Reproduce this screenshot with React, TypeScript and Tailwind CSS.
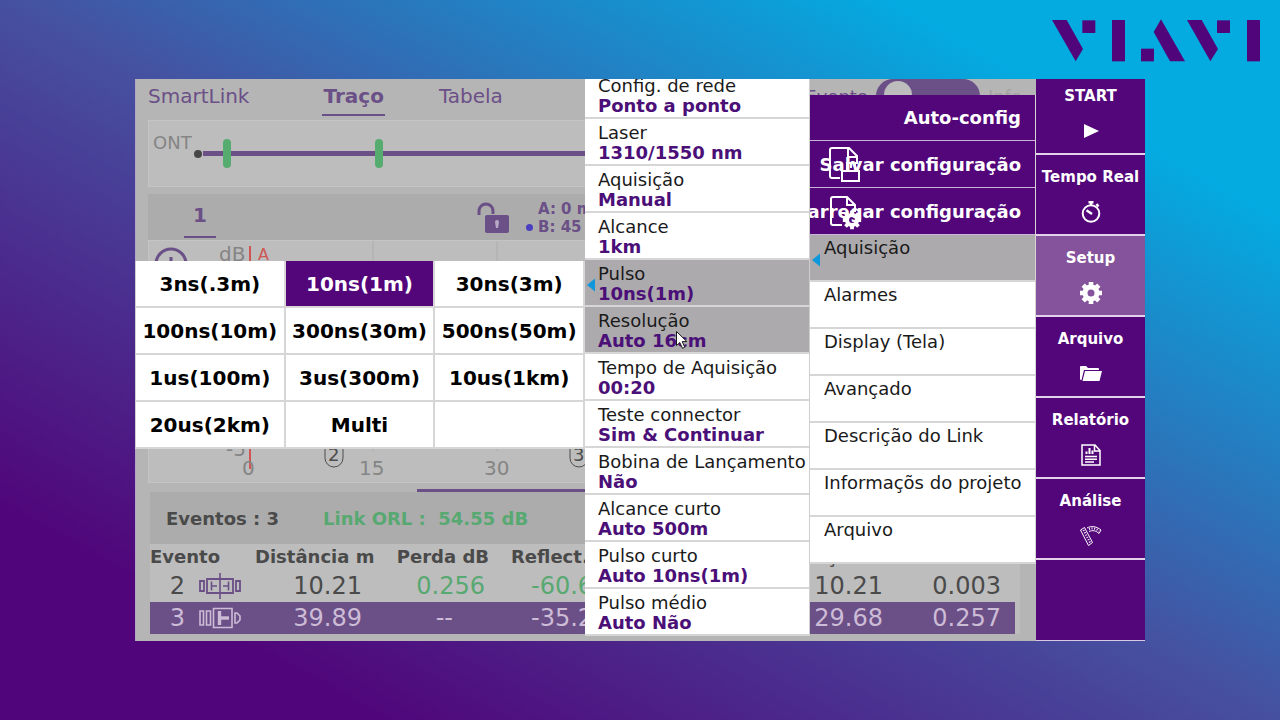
import React, { useState } from "react";

const acquisitionSettings = [
  { label: "Config. de rede", value: "Ponto a ponto" },
  { label: "Laser", value: "1310/1550 nm" },
  { label: "Aquisição", value: "Manual" },
  { label: "Alcance", value: "1km" },
  { label: "Pulso", value: "10ns(1m)", active: true, open: true },
  { label: "Resolução", value: "Auto 16cm", active: true },
  { label: "Tempo de Aquisição", value: "00:20" },
  { label: "Teste connector", value: "Sim & Continuar" },
  { label: "Bobina de Lançamento", value: "Não" },
  { label: "Alcance curto", value: "Auto 500m" },
  { label: "Pulso curto", value: "Auto 10ns(1m)" },
  { label: "Pulso médio", value: "Auto Não" },
];

const setupSections = [
  "Aquisição",
  "Alarmes",
  "Display (Tela)",
  "Avançado",
  "Descrição do Link",
  "Informaçõs do projeto",
  "Arquivo",
];

const pulseWidths = [
  "3ns(.3m)",
  "10ns(1m)",
  "30ns(3m)",
  "100ns(10m)",
  "300ns(30m)",
  "500ns(50m)",
  "1us(100m)",
  "3us(300m)",
  "10us(1km)",
  "20us(2km)",
  "Multi",
];

const Logo = () => (
  <svg
    className="absolute top-0 right-0 h-20 w-60"
    viewBox="0 0 720 240"
    fill="#50067a"
    role="img"
    aria-label="VIAVI"
  >
    <path d="M36 60H80L129 147L107 184Z" />
    <path d="M127 61H166V99H127Z" />
    <path d="M216 60H255V184H216Z" />
    <path d="M303 146H342V184H303Z" />
    <path d="M363 58L435 184H390L341 96Z" />
    <path d="M441 60H485L534 147L511 184Z" />
    <path d="M531 61H570V99H531Z" />
    <path d="M621 60H660V184H621Z" />
  </svg>
);

const PlayIcon = () => (
  <svg className="size-6" viewBox="0 0 24 24" fill="currentColor">
    <path d="M5 5L20 12L5 19Z" />
  </svg>
);

const StopwatchIcon = () => (
  <svg
    className="size-6"
    viewBox="0 0 24 24"
    fill="none"
    stroke="currentColor"
    strokeWidth="2"
  >
    <circle cx="12" cy="13.5" r="8.3" />
    <path d="M9.5 2.2H14.5M12 2V5M17.5 4L19.5 6.5" strokeWidth="2.4" />
    <path d="M7.5 10.2L13 14" strokeWidth="2.4" />
  </svg>
);

const GearIcon = ({ className }: { className: string }) => (
  <svg
    className={className}
    viewBox="0 0 24 24"
    fill="none"
    stroke="currentColor"
  >
    <circle cx="12" cy="12" r="6" strokeWidth="5" />
    <path
      d="M12 1V5M12 19V23M1 12H5M19 12H23M4.2 4.2L7 7M17 17L19.8 19.8M4.2 19.8L7 17M17 7L19.8 4.2"
      strokeWidth="4.6"
    />
  </svg>
);

const FolderIcon = () => (
  <svg className="size-6" viewBox="0 0 24 24" fill="currentColor">
    <path d="M1 5Q1 4 2 4H7L9 6H19Q20 6 20 7V8H5L2.5 18H2Q1 18 1 17Z" />
    <path d="M6 9H23L20.5 19H3.5Z" />
  </svg>
);

const ReportIcon = () => (
  <svg
    className="size-6"
    viewBox="0 0 24 24"
    fill="none"
    stroke="currentColor"
    strokeWidth="1.5"
  >
    <path d="M3 2H16L21 7.5V22H3ZM15.5 2V8H21" />
    <path d="M7.5 11V8.5M10.5 11V5M13.5 11V7.5" strokeWidth="2" />
    <path d="M6 13.5H18M6 16.2H18M6 19H15" />
  </svg>
);

const AnalysisIcon = () => (
  <svg
    className="size-6"
    viewBox="0 0 24 24"
    fill="none"
    stroke="currentColor"
    strokeWidth="1"
  >
    <path d="M1.5 6L5.5 3.5L13.5 18.5L9.5 21.5Z" />
    <path d="M4.5 6L11 18.5" strokeDasharray="1 1.6" strokeWidth="2" />
    <path d="M8 4C12 1.5 18 2.5 22 6L20 9.5C17 6.5 13.5 6 10 7.5" />
    <path d="M10 5C13.5 3.6 17.5 4.8 20 7" strokeDasharray="1 1.6" strokeWidth="2" />
  </svg>
);

const FileSaveIcon = () => (
  <svg
    className="absolute top-[5px] left-[18px] h-9 w-8"
    viewBox="0 0 32 36"
    fill="none"
    stroke="#fff"
    strokeWidth="2"
  >
    <path d="M12 32H4Q2 32 2 30V4Q2 2 4 2H21L29 10V18M20 2V11H29" />
    <path d="M14 25H31V35H14ZM19 25V17H27V25M23 18V22" />
  </svg>
);

const FileCogIcon = () => (
  <>
    <svg
      className="absolute top-[7px] left-[18px] h-9 w-8"
      viewBox="0 0 32 36"
      fill="none"
      stroke="#fff"
      strokeWidth="2"
    >
      <path d="M14 30H5Q3 30 3 28V4Q3 2 5 2H19L27 10V17M19 2V10H27" />
    </svg>
    <GearIcon className="absolute top-[22px] left-8 size-5" />
  </>
);

const Caret = () => (
  <svg
    className="absolute top-[18px] left-0.5 h-3.5 w-2"
    viewBox="0 0 8 14"
    fill="#0f97dc"
  >
    <path d="M8 0.5V13.5L0 7Z" />
  </svg>
);

const Pointer = () => (
  <svg
    className="absolute top-[258px] left-[90px] h-5 w-3.5"
    viewBox="0 0 14 20"
    fill="#fff"
    stroke="#1a1a1a"
  >
    <path d="M1.5 1.5V15.5L4.8 12.6L7.5 18.3L9.8 17.2L7.2 11.6H11.8Z" />
  </svg>
);

const SpliceIcon = () => (
  <svg
    className="block h-7 w-[42px]"
    viewBox="0 0 42 28"
    fill="none"
    stroke="currentColor"
    strokeWidth="1.8"
  >
    <path d="M1 9H5V19H1ZM37 9H41V19H37ZM8 7H34V21H8Z" />
    <path
      d="M21 1V27M12.5 9.5V18.5M12.5 14H18M29.5 9.5V18.5M29.5 14H24"
      strokeWidth="1.6"
    />
  </svg>
);

const ConnectorIcon = () => (
  <svg
    className="block h-7 w-[42px]"
    viewBox="0 0 42 28"
    fill="none"
    stroke="currentColor"
    strokeWidth="1.6"
  >
    <path d="M1 7H4.5V21H1ZM7.5 7H11.5V21H7.5ZM14.5 4.5H33V23.5H14.5Z" />
    <path d="M20.5 7V21" strokeWidth="3.4" />
    <path d="M21 14H30" strokeWidth="3.4" />
    <path d="M36 9V19H38L41 16V12L38 9Z" />
  </svg>
);

const LinkView = () => (
  <section className="flex h-[67px] shrink-0 border border-[#c4c4c4] bg-[#bdbdbd] pl-1">
    <span className="pt-2.5 text-[18px] leading-6 text-[#858585]">ONT</span>
    <svg className="h-full w-0 grow">
      <circle cx="6" cy="33" r="4" fill="#474747" />
      <rect x="11" y="30" width="100%" height="5" fill="#6b4f87" />
      <rect x="31" y="18" width="8" height="29" rx="4" fill="#56ab6e" />
      <rect x="183" y="18" width="8" height="29" rx="4" fill="#56ab6e" />
    </svg>
  </section>
);

const TraceView = () => (
  <section className="mt-[7px] shrink-0">
    <div className="flex h-[46px] bg-[#acacac]">
      <div className="ml-9 flex h-11 w-8 items-center justify-center border-b-2 border-[#6b4f87] text-[20px] font-bold text-[#6b4f87]">
        1
      </div>
      <svg className="mt-2 ml-[260px] h-8 w-9" viewBox="0 0 36 32">
        <path
          d="M3 13V9A7 7 0 0 1 17 9V12"
          fill="none"
          stroke="#6b4f87"
          strokeWidth="3"
        />
        <rect x="9" y="13" width="24" height="18" rx="2" fill="#6b4f87" />
        <path d="M19 20A2 2 0 1 1 23 20L22 26H20Z" fill="#b8a8c6" />
      </svg>
      <div className="ml-3.5 pt-1.5 text-[15px] leading-[18px] font-bold text-[#6b4f87]">
        <p className="pl-3">A: 0 m</p>
        <p className="flex items-center gap-[5px]">
          <span className="size-[7px] rounded-full bg-[#4a3fc0]" />
          B: 45
        </p>
      </div>
    </div>
    <svg
      className="block h-[243px] w-full border border-[#c4c4c4] bg-[#bdbdbd]"
      fontSize="20"
      fill="#858585"
    >
      <path d="M224 0V210M348 0V210M472 0V210" stroke="#adadad" />
      <circle cx="22" cy="23" r="15" fill="none" stroke="#6b4f87" strokeWidth="3" />
      <path d="M22 16V30M16 23.5H28" stroke="#6b4f87" strokeWidth="3" />
      <text x="70" y="20">dB</text>
      <path d="M101 5V228" stroke="#cf5552" strokeWidth="2" />
      <text x="109" y="19" fontSize="16" fill="#cf5552">A</text>
      <text x="77" y="215">-5</text>
      <text x="93" y="234">0</text>
      <text x="210" y="234">15</text>
      <text x="335" y="234">30</text>
      <g fill="none" stroke="#4d4d4d">
        <rect x="176" y="192" width="18" height="34" rx="9" />
        <rect x="421" y="192" width="18" height="34" rx="9" />
      </g>
      <g fontSize="18" fill="#4d4d4d">
        <text x="179" y="220">2</text>
        <text x="424" y="220">3</text>
      </g>
    </svg>
  </section>
);

const EventsTable = () => (
  <section className="shrink-0 px-0.5">
    <div className="flex h-[52px] items-center gap-11 bg-[#acacac] pl-4 text-[18px] font-bold whitespace-pre text-[#4a4a4a]">
      <span>Eventos : 3</span>
      <span className="text-[#58a871]">Link ORL :  54.55 dB</span>
    </div>
    <div className="bg-[#bdbdbd] pr-[5px]">
      <table className="w-full table-fixed whitespace-nowrap text-[#4a4a4a]">
        <colgroup>
          <col className="w-[35px]" />
          <col className="w-[70px]" />
          <col className="w-[117px]" />
          <col className="w-[117px]" />
          <col />
          <col className="w-[100px]" />
          <col className="w-[114px]" />
        </colgroup>
        <thead className="text-[18px] leading-[26px]">
          <tr>
            <th className="text-left" colSpan={2}>Evento</th>
            <th className="text-right">Distância m</th>
            <th className="text-right">Perda dB</th>
            <th className="pl-[22px] text-left">Reflect.</th>
            <th className="text-left">Seção m</th>
            <th></th>
          </tr>
        </thead>
        <tbody className="text-[24px] leading-8">
          <tr>
            <td className="text-right">2</td>
            <td className="pl-3.5 text-[#6b4f87]"><SpliceIcon /></td>
            <td className="pr-2.5 text-right">10.21</td>
            <td className="pr-1 text-right text-[#58a871]">0.256</td>
            <td className="pl-[42px] text-[#58a871]">-60.6</td>
            <td className="pr-[18px] text-right">10.21</td>
            <td className="pr-3.5 text-right">0.003</td>
          </tr>
          <tr className="bg-[#6b4f87] text-[#cdbcd6]">
            <td className="text-right">3</td>
            <td className="pl-3.5"><ConnectorIcon /></td>
            <td className="pr-2.5 text-right">39.89</td>
            <td className="pr-9 text-right">--</td>
            <td className="pl-[42px]">-35.2</td>
            <td className="pr-[18px] text-right">29.68</td>
            <td className="pr-3.5 text-right">0.257</td>
          </tr>
        </tbody>
      </table>
    </div>
  </section>
);

const ResultPage = () => (
  <main className="flex h-full flex-col border-l border-[#b3a5c4] bg-[#b5b5b5] pr-3.5 pl-3">
    <div className="flex h-[41px] shrink-0 items-start text-[20px] text-[#6b4f87]">
      <nav className="flex grow">
        <a href="#smartlink" className="leading-[34px]">SmartLink</a>
        <a
          href="#traco"
          className="ml-[73px] h-[37px] border-b-2 border-[#6b4f87] px-px leading-[34px] font-bold"
        >
          Traço
        </a>
        <a href="#tabela" className="ml-[54px] leading-[34px]">Tabela</a>
      </nav>
      <label className="flex items-center gap-2 text-[18px]">
        Evento
        <input
          type="checkbox"
          className="h-[34px] w-[104px] appearance-none rounded-full bg-[#6b4f87] before:mt-0.5 before:ml-2 before:block before:h-[30px] before:w-7 before:rounded-full before:bg-[#bdbdbd]"
        />
        <span className="text-[#a3a3a3]">Info</span>
      </label>
    </div>
    <LinkView />
    <TraceView />
    <div className="mt-1.5 ml-[269px] h-[3px] shrink-0 bg-[#6b4f87]" />
    <EventsTable />
  </main>
);

const App = () => {
  const [pulse, setPulse] = useState("10ns(1m)");

  const sideButtons = [
    { label: "START", icon: <PlayIcon /> },
    { label: "Tempo Real", icon: <StopwatchIcon /> },
    { label: "Setup", icon: <GearIcon className="size-6" />, active: true },
    { label: "Arquivo", icon: <FolderIcon /> },
    { label: "Relatório", icon: <ReportIcon /> },
    { label: "Análise", icon: <AnalysisIcon /> },
  ];

  return (
    <div className="relative min-h-screen bg-[linear-gradient(to_top_right,#50067a_15%,#4650a0_50%,#03abe1_85%)] px-[135px] py-[79px] font-['DejaVu_Sans',sans-serif]">
      <Logo />
      <div className="flex h-[562px]">
        <div className="relative min-w-0 flex-1 overflow-hidden">
          <ResultPage />

          {/* Cascading menus */}
          <div className="absolute inset-y-0 right-0 flex items-start">
            <div className="mt-[182px] grid w-[450px] grid-cols-3 border-l border-[#d0d0d0] bg-white">
              {pulseWidths.map((width) => (
                <button
                  key={width}
                  onClick={() => setPulse(width)}
                  className={`h-[47px] border-r-2 border-b-2 border-[#d6d6d6] text-[20px] font-bold whitespace-nowrap ${
                    pulse === width ? "bg-[#52067a] text-white" : "bg-white text-black"
                  }`}
                >
                  {width}
                </button>
              ))}
              <div className="border-r-2 border-b-2 border-[#d6d6d6]" />
            </div>

            <div className="relative -mt-[7px] w-[225px] border-r border-[#cfcfcf]">
              {acquisitionSettings.map((item) => (
                <button
                  key={item.label}
                  className={`relative block h-[47px] w-full border-b-2 border-[#d6d6d6] pt-[3px] pl-[13px] text-left text-[18px] leading-5 whitespace-nowrap ${
                    item.active ? "bg-[#acaaac]" : "bg-white"
                  }`}
                >
                  {item.open && <Caret />}
                  <span className="block text-[#1a1a1a]">{item.label}</span>
                  <span className="block font-bold text-[#4b0f78]">{item.value}</span>
                </button>
              ))}
              <Pointer />
            </div>

            <div className="mt-4 w-[226px] border-r border-[#d6d6d6]">
              <div className="text-[18px] font-bold whitespace-nowrap text-white">
                <button className="flex h-[46px] w-full items-center justify-end border-b border-[#c9b3d6] bg-[#52067a] pr-3.5">
                  Auto-config
                </button>
                <button className="relative flex h-[47px] w-full items-center justify-end overflow-hidden border-b border-[#c9b3d6] bg-[#52067a] pr-3.5">
                  <FileSaveIcon />
                  Salvar configuração
                </button>
                <button className="relative flex h-[47px] w-full items-center justify-end overflow-hidden border-b border-[#c9b3d6] bg-[#52067a] pr-3.5">
                  <FileCogIcon />
                  Carregar configuração
                </button>
              </div>
              {setupSections.map((section, i) => (
                <button
                  key={section}
                  className={`relative flex h-[47px] w-full items-start border-b-2 border-[#d6d6d6] pt-[3px] pl-3.5 text-[18px] leading-5 whitespace-nowrap text-[#1a1a1a] ${
                    i === 0 ? "bg-[#acaaac]" : "bg-white"
                  }`}
                >
                  {i === 0 && <Caret />}
                  {section}
                </button>
              ))}
            </div>
          </div>
        </div>

        {/* Side bar */}
        <aside className="flex w-[109px] shrink-0 flex-col justify-end overflow-hidden border-b border-[#d9c9e2] bg-[#52067a] text-[15px] font-bold text-white">
          {sideButtons.map(({ label, icon, active }) => (
            <button
              key={label}
              className={`flex h-[81px] shrink-0 flex-col items-center border-b-2 border-[#e2d3ea] pt-3 leading-5 whitespace-nowrap ${
                active ? "bg-[#85539b]" : ""
              }`}
            >
              {label}
              <span className="mt-[13px] flex size-6 items-center justify-center">{icon}</span>
            </button>
          ))}
          <div className="h-20 shrink-0" />
        </aside>
      </div>
    </div>
  );
};

export default App;
